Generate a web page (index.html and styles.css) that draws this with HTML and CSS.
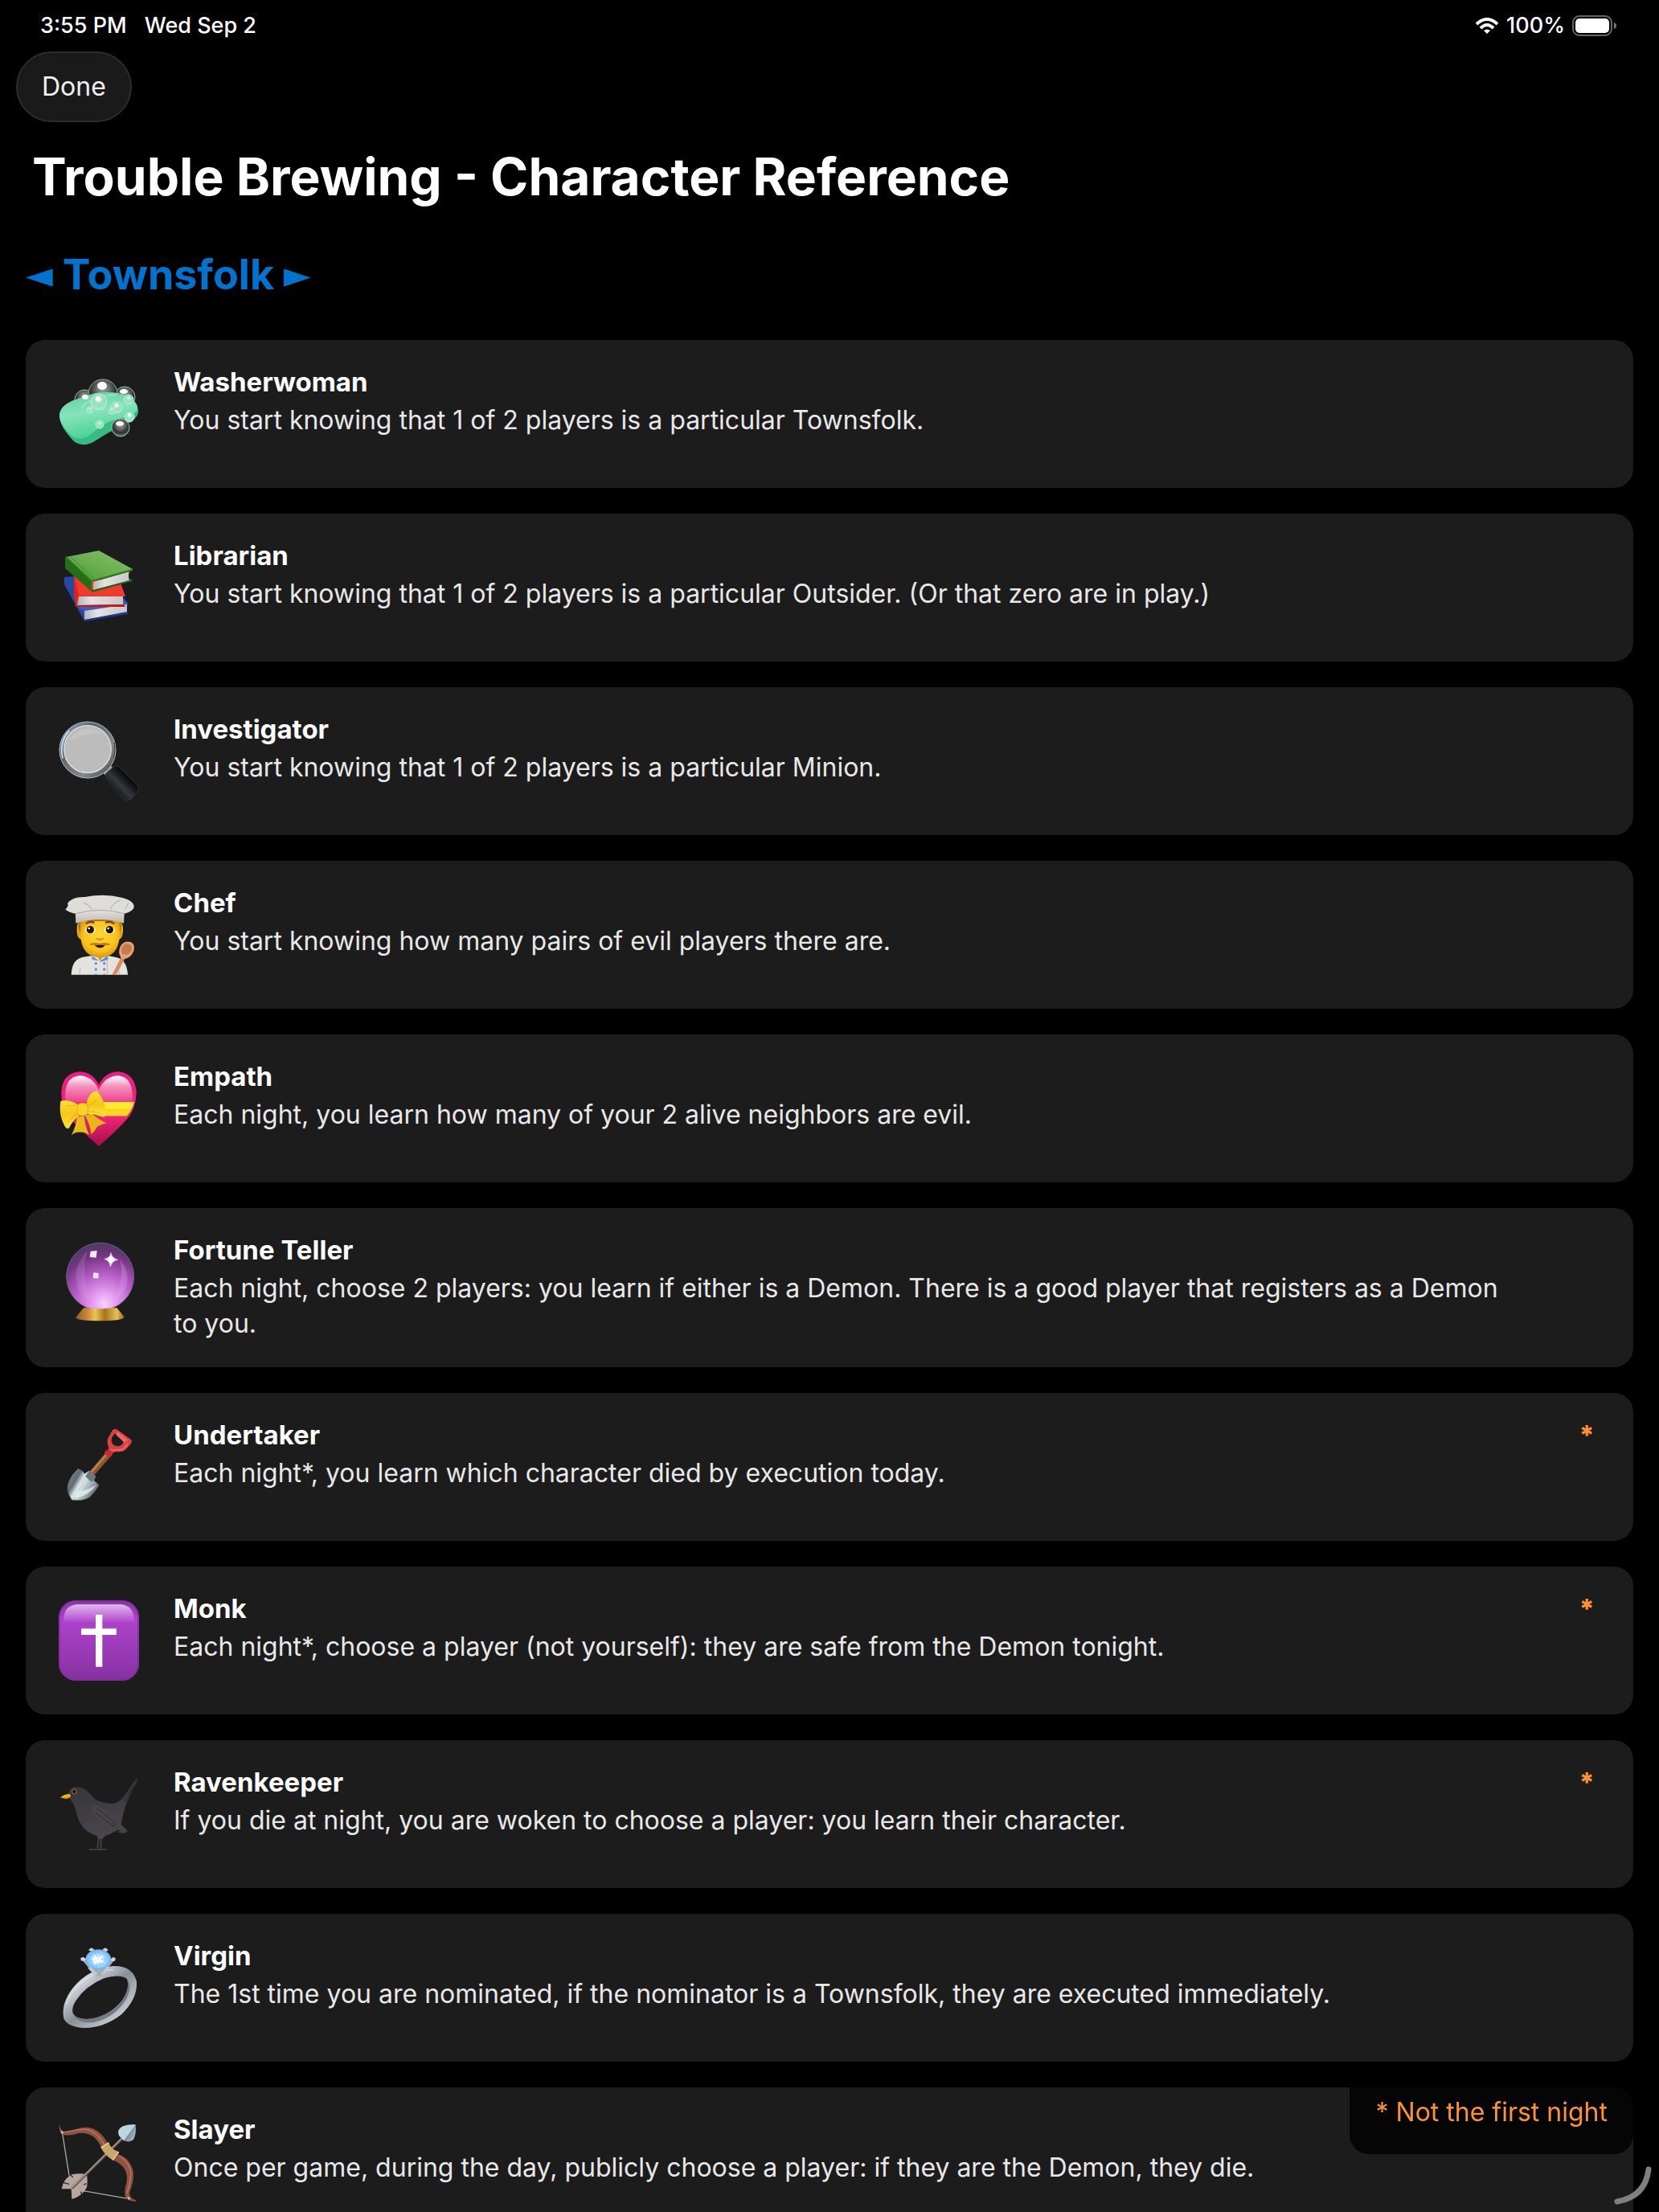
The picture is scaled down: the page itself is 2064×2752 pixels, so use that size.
FILE: index.html
```
<!DOCTYPE html>
<html lang="en">
<head>
    <meta charset="UTF-8">
    <meta name="viewport" content="width=device-width, initial-scale=1.0">
    <title>Trouble Brewing - Character Reference</title>
    <link rel="stylesheet" href="styles.css">
</head>
<body>
    <div class="status">
        <span>3:55 PM</span>
        <span>Wed Sep 2</span>
        <div class="status__right">
            <svg class="status__wifi" viewBox="0 0 30 20" fill="none" stroke="#fff" stroke-width="4">
                <path d="M2 8Q15-4 28 8"/>
                <path d="M7 13Q15 5 23 13"/>
                <path d="M15 20l-4-4q4-3 8 0z" fill="#fff" stroke="none"/>
            </svg>
            <span>100%</span>
            <svg class="status__battery" viewBox="0 0 56 26">
                <rect x="1" y="1" width="48" height="24" rx="8" fill="none" stroke="#666" stroke-width="2"/>
                <rect x="4" y="4" width="42" height="18" rx="5" fill="#fff"/>
                <path d="M52 9q3 1 3 4t-3 4z" fill="#777"/>
            </svg>
        </div>
    </div>

    <header class="header">
        <button class="done" type="button">Done</button>
        <h1 class="title">Trouble Brewing - Character Reference</h1>
        <button class="team" type="button"><span class="team__arrow">◄</span>Townsfolk<span class="team__arrow">►</span></button>
    </header>

    <main class="characters">
        <article class="character">
            <svg class="character__icon" viewBox="0 0 100 100">
                <defs>
                    <linearGradient id="soap" x1="0" y1="0" x2="0.3" y2="1">
                        <stop offset="0" stop-color="#62cf9b"/>
                        <stop offset="0.5" stop-color="#84e3bb"/>
                        <stop offset="1" stop-color="#4bd394"/>
                    </linearGradient>
                    <radialGradient id="bubble" cx="0.5" cy="0.35" r="0.65">
                        <stop offset="0" stop-color="#999"/>
                        <stop offset="0.3" stop-color="#777"/>
                        <stop offset="0.7" stop-color="#2c2c2c"/>
                        <stop offset="1" stop-color="#6b8a80"/>
                    </radialGradient>
                    <radialGradient id="foam" cx="0.5" cy="0.35" r="0.65">
                        <stop offset="0" stop-color="#d5fbe9"/>
                        <stop offset="0.5" stop-color="#93dfbf"/>
                        <stop offset="1" stop-color="#a5e8cc"/>
                    </radialGradient>
                </defs>
                <g fill="url(#bubble)" stroke="#8dbfae" stroke-width="1">
                    <circle cx="31" cy="32" r="12"/>
                    <circle cx="81" cy="29" r="13"/>
                    <circle cx="54" cy="25" r="18"/>
                </g>
                <path d="M0 52C1 39 15 33 30 29C46 22 61 22 76 25C90 28 98 38 98 47C97 57 88 60 76 66C60 73 50 80 42 85C33 90 22 89 16 82C7 72 0 62 0 52Z" fill="#37bd83"/>
                <path d="M0 51C1 39 15 33 30 29C46 22 61 22 76 25C89 28 98 37 97 43C96 51 84 53 70 57C55 61 46 70 37 77C29 82 19 82 13 75C5 67 0 60 0 51Z" fill="url(#soap)"/>
                <path d="M28 42Q38 28 70 26" fill="none" stroke="#a4ecce" stroke-width="3" opacity=".5"/>
                <circle cx="76" cy="67" r="11" fill="url(#bubble)" stroke="#8dbfae"/>
                <g fill="url(#foam)" stroke="#b5efd7">
                    <circle cx="49" cy="35" r="10"/>
                    <circle cx="71" cy="42" r="7"/>
                    <circle cx="65" cy="46" r="4"/>
                    <circle cx="38" cy="45" r="4"/>
                    <circle cx="87" cy="54" r="6"/>
                    <circle cx="50" cy="63" r="5"/>
                    <circle cx="86" cy="32" r="6"/>
                </g>
                <g fill="#fff">
                    <ellipse cx="53" cy="15" rx="6" ry="5"/>
                    <ellipse cx="80" cy="22" rx="5" ry="3"/>
                    <ellipse cx="32" cy="29" rx="4" ry="3"/>
                    <circle cx="48" cy="31" r="3"/>
                    <circle cx="71" cy="39" r="2"/>
                    <ellipse cx="75" cy="62" rx="5" ry="3"/>
                    <circle cx="87" cy="51" r="2"/>
                </g>
            </svg>
            <div class="character__text">
                <h2 class="character__name">Washerwoman</h2>
                <p class="character__ability">You start knowing that 1 of 2 players is a particular Townsfolk.</p>
            </div>
            <span class="character__mark"></span>
        </article>

        <article class="character">
            <svg class="character__icon" viewBox="0 0 100 100">
                <defs>
                    <linearGradient id="greenBook" x1="0" y1="1" x2="1" y2="0">
                        <stop offset="0" stop-color="#4f9a38"/>
                        <stop offset="1" stop-color="#86c46c"/>
                    </linearGradient>
                    <linearGradient id="pages" x1="0" y1="0" x2="1" y2="0">
                        <stop offset="0" stop-color="#b5b5b5"/>
                        <stop offset="0.3" stop-color="#e2e2e2"/>
                        <stop offset="1" stop-color="#c8c8c8"/>
                    </linearGradient>
                </defs>
                <path d="M6 37L18 36L31 74L79 62L86 70L84 72V81L86 82L31 92L6 46Z" fill="#2747a4"/>
                <path d="M18 72L31 79L84 71L77 62Z" fill="#3d5cc4"/>
                <path d="M31 79L84 71V80L31 90Z" fill="url(#pages)"/>
                <path d="M31 90L86 81V83L31 92L29 84Z" fill="#1d3487"/>
                <path d="M18 35L42 50L76 45L82 61H79V71L82 74L21 74L18 60Z" fill="#df231b"/>
                <path d="M18 35L24 60L82 61L76 45Z" fill="#f0392f"/>
                <path d="M24 61H79V71L22 72Z" fill="url(#pages)"/>
                <path d="M22 72L80 71L82 74H21Z" fill="#c31a14"/>
                <path d="M7 12L40 41V55L7 26Z" fill="#236f16"/>
                <path d="M40 53L90 39L91 42L40 56Z" fill="#1c6311"/>
                <path d="M42 43L87 30Q85 35 87 41L42 53Z" fill="url(#pages)"/>
                <path d="M8 12L49 4L91 27L40 42Z" fill="url(#greenBook)"/>
                <path d="M8 12L40 42L91 28" fill="none" stroke="#2c801c" stroke-width="2"/>
                <path d="M14 12L43 39" fill="none" stroke="#3f8c2d"/>
            </svg>
            <div class="character__text">
                <h2 class="character__name">Librarian</h2>
                <p class="character__ability">You start knowing that 1 of 2 players is a particular Outsider. (Or that zero are in play.)</p>
            </div>
            <span class="character__mark"></span>
        </article>

        <article class="character">
            <svg class="character__icon" viewBox="72 111 300 300">
                <defs>
                    <linearGradient id="rim" x1="0" y1="0" x2="1" y2="1">
                        <stop offset="0" stop-color="#8fb4e3"/>
                        <stop offset="0.3" stop-color="#5d6266"/>
                        <stop offset="0.7" stop-color="#85888a"/>
                        <stop offset="1" stop-color="#44474a"/>
                    </linearGradient>
                    <linearGradient id="grip" x1="0" y1="1" x2="1" y2="0">
                        <stop offset="0.2" stop-color="#07090b"/>
                        <stop offset="0.45" stop-color="#33393e"/>
                        <stop offset="0.65" stop-color="#0b0d11"/>
                    </linearGradient>
                </defs>
                <path d="M232 300L262 276L276 292L246 318Z" fill="#a5a8aa"/>
                <path d="M243 318Q238 310 262 292Q282 274 294 282L362 350Q374 366 360 380L342 400Q326 414 312 402Q270 360 243 318Z" fill="url(#grip)" stroke="#3a4045" stroke-width="2"/>
                <circle cx="177" cy="219" r="97" fill="#bdbdbd" stroke="url(#rim)" stroke-width="18"/>
                <circle cx="177" cy="219" r="105" fill="none" stroke="#a9b5c2" stroke-width="3"/>
                <circle cx="177" cy="216" r="88" fill="#bcbcbc" stroke="#ddd" stroke-width="4"/>
                <path d="M112 186Q122 148 172 140Q210 138 232 160Q180 148 112 186Z" fill="#c5c5c5"/>
                <path d="M84 250Q70 190 108 148" fill="none" stroke="#cfe5ff" stroke-width="5"/>
                <path d="M276 190Q282 216 273 250" fill="none" stroke="#6b3d42" stroke-width="4"/>
            </svg>
            <div class="character__text">
                <h2 class="character__name">Investigator</h2>
                <p class="character__ability">You start knowing that 1 of 2 players is a particular Minion.</p>
            </div>
            <span class="character__mark"></span>
        </article>

        <article class="character">
            <svg class="character__icon" viewBox="72 759 300 300">
                <defs>
                    <radialGradient id="face" cx="0.5" cy="0.4" r="0.6">
                        <stop offset="0" stop-color="#ffd834"/>
                        <stop offset="0.7" stop-color="#fbc21c"/>
                        <stop offset="1" stop-color="#dd9410"/>
                    </radialGradient>
                    <linearGradient id="hat" x1="0" y1="0" x2="0" y2="1">
                        <stop offset="0" stop-color="#e8e6e1"/>
                        <stop offset="1" stop-color="#bdb9b2"/>
                    </linearGradient>
                </defs>
                <path d="M116 1058Q118 1000 160 992L196 986H250L286 994Q324 1004 327 1058Z" fill="#e5e3de"/>
                <path d="M146 1058L150 1030M296 1058L290 1026" stroke="#bbb8b1" stroke-width="3"/>
                <path d="M192 986L222 1008L253 986V1002L226 1010L220 1006L194 1002Z" fill="#5d92d8"/>
                <path d="M206 980H238L224 1006Z" fill="#d9920f"/>
                <path d="M250 1004V1058" stroke="#b7b4ae" stroke-width="3"/>
                <g fill="#5b8fdb">
                    <circle cx="208" cy="1016" r="5"/><circle cx="239" cy="1016" r="5"/>
                    <circle cx="208" cy="1038" r="5"/><circle cx="239" cy="1038" r="5"/>
                    <path d="M203 1058q5-8 10 0zM234 1058q5-8 10 0z"/>
                </g>
                <path d="M137 878Q134 920 152 928L160 860H142ZM309 878Q312 920 294 928L286 860H302Z" fill="#e7a716"/>
                <path d="M143 850H302V880L296 908H150L143 880Z" fill="#a77224"/>
                <path d="M150 858H297V900Q297 960 266 982Q224 1006 182 982Q150 960 150 900Z" fill="url(#face)"/>
                <path d="M170 868Q184 856 202 864M243 864Q262 856 277 868" fill="none" stroke="#854910" stroke-width="8"/>
                <ellipse cx="187" cy="891" rx="20" ry="15" fill="#fff2cf"/>
                <ellipse cx="259" cy="891" rx="20" ry="15" fill="#fff2cf"/>
                <circle cx="187" cy="890" r="14" fill="#241208"/>
                <circle cx="259" cy="890" r="14" fill="#241208"/>
                <circle cx="182" cy="885" r="4" fill="#fff"/>
                <circle cx="254" cy="885" r="4" fill="#fff"/>
                <path d="M208 922Q222 936 238 922" fill="#efa50e" stroke="#d98d0c" stroke-width="4"/>
                <path d="M202 946H244Q236 958 223 958Q210 958 202 946Z" fill="#2b1405"/>
                <path d="M182 946Q194 936 222 941Q252 936 263 946Q250 950 223 947Q196 950 182 946Z" fill="#c07a12"/>
                <path d="M131 812L133 866Q222 838 312 866L315 812Z" fill="url(#hat)"/>
                <path d="M94 814Q108 802 102 792Q120 766 166 768Q240 754 304 770Q352 782 350 806Q346 822 314 830Q222 804 132 830Q104 826 94 814Z" fill="#dfddd8"/>
                <path d="M132 830Q222 804 314 830M162 788Q186 800 194 814M262 814Q270 790 300 780M318 812L330 790" fill="none" stroke="#aaa69f" stroke-width="3"/>
                <path d="M268 1058L302 992L315 1000L284 1058Z" fill="#d98c5c"/>
                <path d="M302 996Q288 974 300 950Q314 930 338 936Q356 944 349 970Q338 998 312 1000Z" fill="#e6a274"/>
                <path d="M306 980Q298 960 312 946Q328 936 341 950Q346 974 322 984Z" fill="#c67b4f"/>
            </svg>
            <div class="character__text">
                <h2 class="character__name">Chef</h2>
                <p class="character__ability">You start knowing how many pairs of evil players there are.</p>
            </div>
            <span class="character__mark"></span>
        </article>

        <article class="character">
            <svg class="character__icon" viewBox="72 117 300 300">
                <defs>
                    <linearGradient id="heart" x1="0" y1="0" x2="0" y2="1">
                        <stop offset="0" stop-color="#e81f84"/>
                        <stop offset="0.6" stop-color="#f02576"/>
                        <stop offset="1" stop-color="#a60d4b"/>
                    </linearGradient>
                    <linearGradient id="gloss" x1="0" y1="0" x2="0" y2="1">
                        <stop offset="0" stop-color="#fff"/>
                        <stop offset="0.4" stop-color="#f391bd"/>
                        <stop offset="1" stop-color="#f0408f"/>
                    </linearGradient>
                    <linearGradient id="bow" x1="0" y1="0" x2="0" y2="1">
                        <stop offset="0" stop-color="#ffe030"/>
                        <stop offset="0.5" stop-color="#f5c51a"/>
                        <stop offset="1" stop-color="#ffe63a"/>
                    </linearGradient>
                </defs>
                <path d="M219 408Q140 340 102 292Q78 256 79 206Q82 138 144 130Q196 130 219 180Q242 130 294 130Q354 138 359 206Q358 256 336 292Q298 340 219 408Z" fill="url(#heart)"/>
                <path d="M94 244Q86 150 146 145Q196 146 219 198Q242 146 292 145Q350 150 344 244Z" fill="url(#gloss)"/>
                <path d="M234 243H351Q344 272 324 295H234Z" fill="#ffec2d"/>
                <path d="M240 268H340L324 295H240Z" fill="#f6d822"/>
                <path d="M138 298Q134 334 117 366Q134 354 148 356Q164 354 183 366Q166 330 164 296Z" fill="#e9bd19"/>
                <path d="M168 294Q188 330 190 364Q204 352 214 334Q230 326 247 322Q216 308 192 286Z" fill="#e6b717"/>
                <path d="M142 252Q100 230 76 240Q68 290 90 330Q98 346 108 340Q122 310 150 290Z" fill="url(#bow)"/>
                <path d="M172 252Q180 206 212 201Q246 240 245 292Q242 302 230 298Q200 286 174 288Z" fill="url(#bow)"/>
                <path d="M142 252Q112 262 96 256M146 284Q118 296 104 320M176 258Q196 252 208 236M176 280Q206 276 236 292" fill="none" stroke="#c48e0f" stroke-width="4" opacity=".3"/>
                <rect x="138" y="248" width="40" height="46" rx="14" fill="#fbd327" stroke="#d9ab16" stroke-width="3"/>
            </svg>
            <div class="character__text">
                <h2 class="character__name">Empath</h2>
                <p class="character__ability">Each night, you learn how many of your 2 alive neighbors are evil.</p>
            </div>
            <span class="character__mark"></span>
        </article>

        <article class="character">
            <svg class="character__icon" viewBox="72 765 300 300">
                <defs>
                    <radialGradient id="orb" cx="0.56" cy="0.9" r="0.9">
                        <stop offset="0" stop-color="#fbd0ff"/>
                        <stop offset="0.2" stop-color="#e49bf0"/>
                        <stop offset="0.5" stop-color="#b45cc6"/>
                        <stop offset="0.8" stop-color="#73357f"/>
                        <stop offset="1" stop-color="#4a3a62"/>
                    </radialGradient>
                    <linearGradient id="base" x1="0" y1="0" x2="1" y2="0">
                        <stop offset="0" stop-color="#8a5c22"/>
                        <stop offset="0.25" stop-color="#d18a3b"/>
                        <stop offset="0.4" stop-color="#e6c84f"/>
                        <stop offset="0.6" stop-color="#a8741f"/>
                        <stop offset="0.85" stop-color="#e5c453"/>
                        <stop offset="1" stop-color="#8a5a20"/>
                    </linearGradient>
                </defs>
                <circle cx="224" cy="895" r="126" fill="url(#orb)" stroke="#6a6190" stroke-width="3"/>
                <path d="M140 930Q118 860 176 800Q150 880 190 990Q150 970 140 930Z" fill="#d9a6ec" opacity=".2"/>
                <path d="M318 940Q340 880 296 830Q318 890 276 980Q306 970 318 940Z" fill="#e2a6f4" opacity=".3"/>
                <path d="M162 1011Q224 1018 286 1011L314 1045Q312 1060 224 1060Q136 1060 133 1047Z" fill="url(#base)"/>
                <path d="M264 806Q268 826 290 832Q268 836 262 858Q260 836 240 829Q260 826 264 806Z" fill="#fff" stroke="#ff9cf5" stroke-width="3"/>
                <path d="M188 800L212 798L209 824L185 822ZM199 880L218 882L217 902L197 900Z" fill="#fbe3fb"/>
            </svg>
            <div class="character__text">
                <h2 class="character__name">Fortune Teller</h2>
                <p class="character__ability">Each night, choose 2 players: you learn if either is a Demon. There is a good player that registers as a Demon to you.</p>
            </div>
            <span class="character__mark"></span>
        </article>

        <article class="character">
            <svg class="character__icon" viewBox="72 105 300 300">
                <defs>
                    <linearGradient id="blade" x1="0" y1="0" x2="1" y2="0.6">
                        <stop offset="0" stop-color="#8b9ba2"/>
                        <stop offset="0.35" stop-color="#5d6c73"/>
                        <stop offset="0.5" stop-color="#dfe8ea"/>
                        <stop offset="0.75" stop-color="#a9b7bb"/>
                        <stop offset="1" stop-color="#5c6b70"/>
                    </linearGradient>
                </defs>
                <path d="M180 278L244 204L260 218L196 292Z" fill="#b9794f"/>
                <path d="M188 285L252 211L260 218L196 292Z" fill="#8c5433"/>
                <path d="M142 262Q158 268 166 280L184 269L207 290L200 306Q212 314 219 324Q204 350 184 368Q158 384 118 378Q92 340 108 308Q120 280 142 262Z" fill="url(#blade)" stroke="#57666c" stroke-width="2"/>
                <path d="M192 280L156 342Q144 354 140 344L166 290Z" fill="#cfdbde"/>
                <path d="M184 269L207 290L192 312L168 290Z" fill="#6b797f"/>
                <path d="M142 346Q176 344 210 322Q184 360 136 372Q124 370 142 346Z" fill="#edf3f4" opacity=".7"/>
                <path d="M240 206Q240 194 250 192L270 204Q268 218 256 220Z" fill="#d32a2a"/>
                <path fill-rule="evenodd" d="M256 184Q246 160 254 146L270 118Q280 108 290 118L338 152Q346 160 336 172L320 190Q308 202 282 198L270 204L252 192ZM280 130Q264 144 266 158Q270 178 292 178Q306 176 312 160Z" fill="#da4142"/>
                <path d="M290 124L328 154L314 164L282 134Z" fill="#f06560"/>
                <path d="M262 190Q290 196 310 188L328 168" fill="none" stroke="#f0746f" stroke-width="4"/>
            </svg>
            <div class="character__text">
                <h2 class="character__name">Undertaker</h2>
                <p class="character__ability">Each night*, you learn which character died by execution today.</p>
            </div>
            <span class="character__mark">*</span>
        </article>

        <article class="character">
            <svg class="character__icon" viewBox="72 753 300 300">
                <defs>
                    <linearGradient id="tile" x1="0" y1="0" x2="0" y2="1">
                        <stop offset="0" stop-color="#8c33a8"/>
                        <stop offset="0.25" stop-color="#ae42cc"/>
                        <stop offset="1" stop-color="#8531a0"/>
                    </linearGradient>
                    <linearGradient id="shine" x1="0" y1="0" x2="0" y2="1">
                        <stop offset="0" stop-color="#e2b8ec"/>
                        <stop offset="1" stop-color="#b249cf"/>
                    </linearGradient>
                </defs>
                <rect x="69" y="753" width="300" height="300" rx="64" fill="url(#tile)"/>
                <rect x="72" y="756" width="294" height="294" rx="61" fill="none" stroke="#7d2c96" stroke-width="6" opacity=".6"/>
                <path d="M87 834Q86 768 144 768H294Q352 768 351 834Z" fill="url(#shine)"/>
                <path d="M207 805H232V858H285V882H232V1001H207V882H153V858H207Z" fill="#fff"/>
                <path d="M207 805H232M153 858H207M232 858H285" stroke="#a99" stroke-width="3"/>
            </svg>
            <div class="character__text">
                <h2 class="character__name">Monk</h2>
                <p class="character__ability">Each night*, choose a player (not yourself): they are safe from the Demon tonight.</p>
            </div>
            <span class="character__mark">*</span>
        </article>

        <article class="character">
            <svg class="character__icon" viewBox="72 111 300 300">
                <defs>
                    <linearGradient id="plumage" x1="0" y1="0" x2="0.4" y2="1">
                        <stop offset="0" stop-color="#363438"/>
                        <stop offset="0.5" stop-color="#3e3b41"/>
                        <stop offset="1" stop-color="#4b464e"/>
                    </linearGradient>
                </defs>
                <path d="M218 346L214 388M227 346L226 390M183 393H247" stroke="#4a4440" stroke-width="5"/>
                <path d="M105 188Q108 160 136 159Q168 160 192 192Q210 218 266 222Q292 224 318 188L358 130Q366 130 358 146Q332 192 318 232Q306 270 302 300L326 324L314 332L276 326Q260 338 242 342L232 354H218L212 342Q150 326 134 252Q128 222 112 206Z" fill="url(#plumage)"/>
                <path d="M196 222Q240 240 268 274Q288 302 322 326Q250 320 208 276Q184 248 196 222Z" fill="#474349"/>
                <path d="M210 240Q250 262 284 304M206 254Q240 282 276 308M318 216L358 140M310 210L348 156" fill="none" stroke="#29272b" stroke-width="3"/>
                <path d="M276 326L302 324L290 320Z" fill="#0d0d0f"/>
                <path d="M75 199Q90 186 110 186L114 194Q108 204 96 203Z" fill="#f2b90f"/>
                <path d="M76 200L112 196Q106 204 96 203Z" fill="#c98b0a"/>
                <circle cx="127" cy="177" r="8" fill="#0c0907" stroke="#b07a20" stroke-width="3"/>
            </svg>
            <div class="character__text">
                <h2 class="character__name">Ravenkeeper</h2>
                <p class="character__ability">If you die at night, you are woken to choose a player: you learn their character.</p>
            </div>
            <span class="character__mark">*</span>
        </article>

        <article class="character">
            <svg class="character__icon" viewBox="72 759 300 300">
                <defs>
                    <linearGradient id="band" x1="0" y1="0" x2="1" y2="1">
                        <stop offset="0" stop-color="#aeb4bc"/>
                        <stop offset="0.25" stop-color="#d0d6dc"/>
                        <stop offset="0.5" stop-color="#8a9098"/>
                        <stop offset="0.8" stop-color="#c5cad0"/>
                        <stop offset="1" stop-color="#73787f"/>
                    </linearGradient>
                    <radialGradient id="gem">
                        <stop offset="0" stop-color="#f2fcff"/>
                        <stop offset="0.6" stop-color="#a4dcfb"/>
                        <stop offset="1" stop-color="#6faaf0"/>
                    </radialGradient>
                </defs>
                <path fill-rule="evenodd" d="M88 1024Q76 970 122 910Q180 838 270 828Q344 824 360 886Q364 950 304 1008Q240 1058 166 1059Q104 1058 88 1024ZM122 1004Q138 1032 196 1024Q262 1010 306 956Q338 908 324 876Q300 856 238 874Q170 902 134 956Q116 982 122 1004Z" fill="url(#band)"/>
                <path d="M122 1004Q138 1032 196 1024Q262 1010 306 956Q336 912 324 876Q346 900 322 950Q280 1020 200 1038Q136 1044 122 1004Z" fill="#727a84"/>
                <path d="M98 972Q112 914 188 866Q232 842 274 842" fill="none" stroke="#e3e8ec" stroke-width="5" opacity=".6"/>
                <path d="M156 804L206 866H230L278 804L262 800L218 846L170 800Z" fill="#a9adad"/>
                <path d="M180 768L190 760L202 766L196 776ZM232 766L244 760L254 768L244 776ZM151 798L160 794L170 800L166 810L152 808ZM264 800L274 794L282 800L278 810H266Z" fill="#d0d3d3"/>
                <ellipse cx="217" cy="804" rx="48" ry="38" fill="url(#gem)"/>
                <path d="M186 790L206 776L232 782L250 800L232 820L204 828L184 812ZM206 776L214 804L184 812M214 804L250 800M214 804L232 820" fill="none" stroke="#6dacf2" stroke-width="3" stroke-dasharray="7 5"/>
                <path d="M194 800l12-14 10 12 18-10-6 18 10 10-24-2-12 8z" fill="#fff" opacity=".8"/>
                <path d="M178 836L190 830L198 842L214 858L206 864ZM258 832L248 830L240 842L226 860L236 858Z" fill="#c6caca"/>
            </svg>
            <div class="character__text">
                <h2 class="character__name">Virgin</h2>
                <p class="character__ability">The 1st time you are nominated, if the nominator is a Townsfolk, they are executed immediately.</p>
            </div>
            <span class="character__mark"></span>
        </article>

        <article class="character">
            <svg class="character__icon" viewBox="162 237 300 300">
                <defs>
                    <linearGradient id="arrowhead" x1="0" y1="0" x2="1" y2="0.5">
                        <stop offset="0.3" stop-color="#bfd5e2"/>
                        <stop offset="0.6" stop-color="#70828f"/>
                        <stop offset="1" stop-color="#a2b5c1"/>
                    </linearGradient>
                </defs>
                <path d="M173 282L198 440M212 490L418 526" stroke="#aaa" stroke-width="4"/>
                <path d="M170 490Q176 452 208 436Q240 430 264 436Q268 464 264 484Q250 516 208 528L206 490Z" fill="#b9a5a0"/>
                <path d="M176 466L198 472M204 438L212 446M262 470L252 474M246 516L242 500" stroke="#2a2424" stroke-width="4"/>
                <path d="M208 488L400 298" stroke="#5f534c" stroke-width="10"/>
                <path d="M207 486L398 297" stroke="#a89b90" stroke-width="5"/>
                <path d="M446 250Q450 284 438 306Q424 318 402 310L384 290Q376 266 400 256Q420 248 446 250Z" fill="url(#arrowhead)"/>
                <path d="M446 250L402 310L384 290Q376 266 400 256Q420 248 446 250Z" fill="#bdd5e3"/>
                <path d="M162 246Q162 262 174 274Q194 280 226 266Q296 244 336 310L344 330L320 340Q294 274 232 282Q192 296 168 284Q158 264 162 246Z" fill="#8f5340"/>
                <path d="M362 382L380 360Q428 376 438 430Q438 470 424 500Q418 522 448 532L446 537Q416 534 408 522Q402 500 412 468Q424 410 362 382Z" fill="#8f5340"/>
                <path d="M180 278Q214 270 240 268Q294 260 330 326M384 366Q430 396 428 438Q424 478 414 506" fill="none" stroke="#bd7a61" stroke-width="4"/>
                <path d="M316 334L346 316Q352 342 384 352L362 384Q328 362 316 334Z" fill="#c9a76a"/>
                <path d="M317 336L346 317M383 352L361 382" stroke="#e6cc93" stroke-width="5"/>
                <path d="M166 272l12 6-6 8zM414 520l12 2-4 10z" fill="#ced6dc"/>
            </svg>
            <div class="character__text">
                <h2 class="character__name">Slayer</h2>
                <p class="character__ability">Once per game, during the day, publicly choose a player: if they are the Demon, they die.</p>
            </div>
            <span class="character__mark"></span>
        </article>
    </main>

    <div class="legend">* Not the first night</div>
    <svg class="resize" viewBox="0 0 48 48">
        <path d="M43 4Q39 38 4 44" fill="none" stroke="#808080" stroke-width="7" stroke-linecap="round"/>
    </svg>
</body>
</html>
```
FILE: styles.css
```
* {
    box-sizing: border-box;
}

body {
    display: flex;
    flex-direction: column;
    height: 100vh;
    margin: 0;
    overflow: hidden;
    background-color: #000;
    color: #fff;
    font-family: Inter, 'Liberation Sans', sans-serif;
    font-size: 32px;
    line-height: 40px;
}

h1,
h2,
p {
    margin: 0;
}

button {
    border: none;
    background: none;
    color: inherit;
    font: inherit;
    cursor: pointer;
}

.status {
    display: flex;
    align-items: center;
    gap: 22px;
    height: 64px;
    flex-shrink: 0;
    padding: 0 52px 0 50px;
    font-size: 27px;
    font-weight: 500;
}

.status__right {
    display: flex;
    align-items: center;
    gap: 9px;
    margin-left: auto;
}

.status__wifi {
    width: 30px;
    height: 20px;
}

.status__battery {
    width: 56px;
    height: 26px;
}

.header {
    display: flex;
    flex-direction: column;
    align-items: flex-start;
    flex-shrink: 0;
    padding: 0 20px;
}

.done {
    height: 88px;
    padding: 0 30px;
    border: 2px solid #2c2c2c;
    border-radius: 44px;
    background-color: #1a1a1a;
    color: #f0f0f0;
}

.title {
    margin-top: 28px;
    padding: 0 20px;
    font-size: 64px;
    font-weight: 700;
    line-height: 80px;
}

.team {
    display: flex;
    align-items: center;
    gap: 12px;
    margin: 48px 0;
    padding: 0 12px;
    color: #0073cf;
    font-size: 52px;
    font-weight: 700;
    line-height: 67px;
}

.team__arrow {
    font-family: 'DejaVu Sans', sans-serif;
    font-size: 44px;
    font-weight: 400;
}

.characters {
    display: flex;
    flex: 1;
    flex-direction: column;
    gap: 32px;
    min-height: 0;
    padding: 0 32px 32px;
    overflow-y: auto;
    scrollbar-width: none;
}

.character {
    display: flex;
    flex-shrink: 0;
    align-items: flex-start;
    gap: 32px;
    padding: 32px;
    border-radius: 24px;
    background-color: #1c1c1c;
}

.character__icon {
    width: 120px;
    height: 120px;
    padding: 10px;
    flex-shrink: 0;
    overflow: visible;
}

.character__text {
    flex: 1;
}

.character__name {
    margin-bottom: 6px;
    font-size: 33px;
    font-weight: 700;
}

.character__ability {
    padding-right: 16px;
    color: #e8e8e8;
    line-height: 44px;
}

.character__mark {
    width: 52px;
    color: #ff9230;
    font-size: 33px;
    font-weight: 800;
    text-align: center;
}

.legend {
    position: fixed;
    right: 32px;
    bottom: 72px;
    padding: 32px;
    border-radius: 24px;
    background-color: rgba(0, 0, 0, 0.8);
    color: #ff9230;
}

.resize {
    position: fixed;
    right: 8px;
    bottom: 9px;
    width: 48px;
    height: 48px;
}
```
